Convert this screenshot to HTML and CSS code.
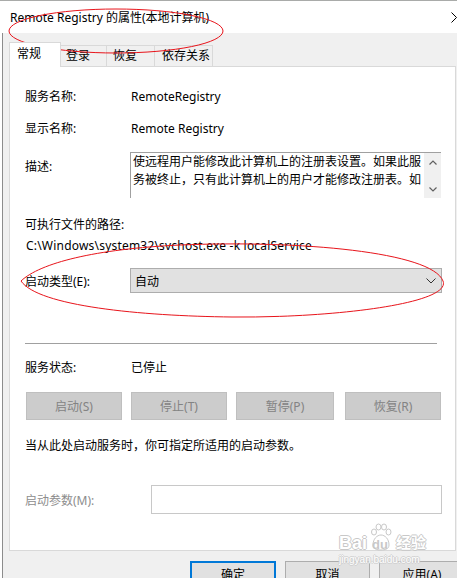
FILE: index.html
```html
<!DOCTYPE html>
<html>
<head>
<meta charset="utf-8">
<link rel="stylesheet" href="styles.css">
</head>
<body>
<div class="titlebar">
  <span class="title">Remote Registry 的属性(本地计算机)</span>
  <svg class="close" width="6" height="11" viewBox="0 0 6 11"><path d="M0.5 0.5 L5.5 5.5 L0.5 10.5" fill="none" stroke="#000" stroke-width="1"/></svg>
</div>
<div class="window">
  <div class="tabs">
    <div class="tab active">常规</div>
    <div class="tab t2">登录</div>
    <div class="tab t3">恢复</div>
    <div class="tab t4">依存关系</div>
  </div>
  <div class="panel">
    <div class="row r-name"><span class="label">服务名称:</span><span class="value">RemoteRegistry</span></div>
    <div class="row r-display"><span class="label">显示名称:</span><span class="value">Remote Registry</span></div>
    <div class="row r-desc">
      <span class="label desc-label">描述:</span>
      <div class="desc">
        <div class="desc-text">
          <div>使远程用户能修改此计算机上的注册表设置。如果此服</div>
          <div>务被终止，只有此计算机上的用户才能修改注册表。如</div>
        </div>
        <div class="scroll">
          <svg width="8" height="5" viewBox="0 0 8 5"><path d="M0.5 4.5 L4 1 L7.5 4.5" fill="none" stroke="#606060" stroke-width="1.2"/></svg>
          <svg width="8" height="5" viewBox="0 0 8 5"><path d="M0.5 0.5 L4 4 L7.5 0.5" fill="none" stroke="#606060" stroke-width="1.2"/></svg>
        </div>
      </div>
    </div>
    <div class="row r-pathlabel">可执行文件的路径:</div>
    <div class="row r-path">C:\Windows\system32\svchost.exe -k localService</div>
    <div class="row r-combo">
      <span class="label">启动类型(E):</span>
      <div class="combo"><span>自动</span><svg class="combo-arrow" width="10" height="6" viewBox="0 0 10 6"><path d="M0.5 0.5 L5 5 L9.5 0.5" fill="none" stroke="#333" stroke-width="1"/></svg></div>
    </div>
    <div class="sep"></div>
    <div class="row r-status"><span class="label">服务状态:</span><span class="value">已停止</span></div>
    <div class="row r-buttons">
      <div class="sbtn b1">启动(S)</div>
      <div class="sbtn b2">停止(T)</div>
      <div class="sbtn b3">暂停(P)</div>
      <div class="sbtn b4">恢复(R)</div>
    </div>
    <div class="row r-hint">当从此处启动服务时，你可指定所适用的启动参数。</div>
    <div class="row r-params">
      <span class="label params-label">启动参数(M):</span>
      <div class="input"></div>
    </div>
  </div>
  <div class="footer">
    <div class="btn default ok">确定</div>
    <div class="btn cancel">取消</div>
    <div class="btn apply">应用(A)</div>
  </div>
</div>

<div class="watermark">
  <div class="wm-logo">
    <span class="wm-bai">Bai</span>
    <span class="wm-paw">
      <svg width="22" height="28" viewBox="0 0 22 28">
        <g fill="#fff" stroke="#c8c8c8" stroke-width="1">
          <ellipse cx="4" cy="9" rx="2.5" ry="3"/>
          <ellipse cx="8.5" cy="4" rx="2.5" ry="3"/>
          <ellipse cx="14" cy="4" rx="2.5" ry="3"/>
          <ellipse cx="18.5" cy="9" rx="2.5" ry="3"/>
          <path d="M3 22 C3 16 7 12 11 12 C15 12 19 16 19 22 C19 26 15 27 11 27 C7 27 3 26 3 22 Z"/>
        </g>
      </svg>
      <span class="wm-du">du</span>
    </span>
    <span class="wm-jy">经验</span>
  </div>
  <div class="wm-url">jingyan.baidu.com</div>
</div>

<svg class="marks" width="457" height="578" viewBox="0 0 457 578">
  <ellipse cx="116" cy="31" rx="107" ry="22" fill="none" stroke="#e8141b" stroke-width="1"/>
  <path d="M21 281 C40 263 95 249 180 245 C300 240 432 252 443 281 C452 304 330 318 232 317 C140 316 38 306 21 281 Z" fill="none" stroke="#e8141b" stroke-width="1"/>
</svg>
</body>
</html>
```
FILE: styles.css
```css
body {
  margin: 0;
  width: 457px;
  height: 578px;
  overflow: hidden;
  position: relative;
  background: #fff;
  font-family: "Noto Sans", "Noto Sans CJK SC", sans-serif;
  font-size: 12px;
  color: #000;
}

.titlebar {
  height: 33px;
  box-sizing: border-box;
  border-top: 1px solid #a9aba9;
  display: flex;
  align-items: flex-start;
  padding-left: 10px;
}

.title {
  margin-top: 9px;
  line-height: 16px;
}

.close {
  margin-left: auto;
  margin-top: 11px;
}

.window {
  margin-left: 2px;
  border-left: 1px solid #8c8c8c;
  background: #f0f0f0;
  height: 545px;
}

.tabs {
  display: flex;
  align-items: flex-end;
  height: 33px;
  padding-left: 6px;
  box-sizing: border-box;
}

.tab {
  height: 21px;
  box-sizing: border-box;
  border: 1px solid #d9d9d9;
  border-bottom: none;
  padding: 3px 0 0 5px;
  line-height: 14px;
  background: #f0f0f0;
  margin-left: -1px;
}

.tab.active {
  height: 25px;
  width: 52px;
  margin-left: 0;
  background: #fff;
  padding: 4px 0 0 7px;
  margin-bottom: -1px;
  position: relative;
  z-index: 1;
}

.t2 { width: 47px; }
.t3 { width: 49px; padding-left: 6px; }
.t4 { width: 59px; padding-left: 7px; }

.panel {
  margin-left: 6px;
  width: 447px;
  height: 485px;
  box-sizing: border-box;
  border: 1px solid #d9d9d9;
  background: #fff;
  padding-left: 15px;
  display: flex;
  flex-direction: column;
}

.row {
  display: flex;
  align-items: center;
  height: 20px;
  flex: none;
}

.label {
  width: 105px;
  flex: none;
}

.value {
  padding-left: 1px;
}

.r-name { margin-top: 19px; }
.r-display { margin-top: 12px; }

.r-desc {
  margin-top: 14px;
  height: 46px;
  align-items: flex-start;
}

.desc-label {
  margin-top: 5px;
  line-height: 20px;
}

.desc {
  width: 311px;
  height: 46px;
  box-sizing: border-box;
  border-top: 1px solid #a0a0a0;
  border-left: 1px solid #a0a0a0;
  display: flex;
}

.desc-text {
  flex: 1;
  padding-left: 2px;
  line-height: 18px;
  overflow: hidden;
  white-space: nowrap;
}

.scroll {
  width: 17px;
  flex: none;
  background: #f0f0f0;
  display: flex;
  flex-direction: column;
  align-items: center;
  justify-content: space-between;
  padding: 7px 0 6px;
  box-sizing: border-box;
}

.r-pathlabel { margin-top: 16px; }
.r-path { margin-top: 1px; padding-left: 1px; letter-spacing: 0.2px; }

.r-combo {
  margin-top: 13px;
  height: 25px;
}

.combo {
  width: 312px;
  height: 25px;
  box-sizing: border-box;
  border: 1px solid #adadad;
  background: #e1e1e1;
  display: flex;
  align-items: center;
  padding-left: 4px;
}

.combo-arrow {
  margin-left: auto;
  margin-right: 5px;
}

.sep {
  margin-top: 50px;
  height: 1px;
  width: 412px;
  background: #a0a0a0;
  flex: none;
}

.r-status { margin-top: 13px; }

.r-buttons {
  margin-top: 15px;
  height: 28px;
  padding-left: 1px;
}

.sbtn {
  height: 28px;
  width: 96px;
  box-sizing: border-box;
  border: 1px solid #bfbfbf;
  background: #cccccc;
  color: #838383;
  display: flex;
  align-items: center;
  justify-content: center;
}

.b2 { margin-left: 9px; }
.b3 { margin-left: 9px; width: 98px; }
.b4 { margin-left: 11px; }

.r-hint { margin-top: 15px; }

.r-params {
  margin-top: 30px;
  height: 29px;
}

.params-label {
  width: 126px;
  color: #8d8d8d;
}

.input {
  width: 291px;
  height: 29px;
  box-sizing: border-box;
  border: 1px solid #c8c8c8;
  background: #fff;
}

.footer {
  display: flex;
  gap: 9px;
  padding-left: 187px;
  margin-top: 10px;
}

.btn {
  box-sizing: border-box;
  height: 26px;
  border: 1px solid #adadad;
  background: #e1e1e1;
  text-align: center;
  line-height: 14px;
  padding-top: 6px;
  flex: none;
}

.btn.default {
  border: 2px solid #0078d7;
  padding-top: 5px;
}

.ok { width: 86px; }
.cancel { width: 85px; }
.apply { width: 86px; }

.watermark {
  position: absolute;
  left: 339px;
  top: 522px;
  pointer-events: none;
}

.wm-logo {
  display: flex;
  align-items: flex-end;
  height: 31px;
}

.wm-bai, .wm-jy, .wm-du {
  color: #fff;
  text-shadow: -1px 0 #c8c8c8, 1px 0 #c8c8c8, 0 -1px #c8c8c8, 0 1px #c8c8c8;
  font-family: "Liberation Sans", "Noto Sans CJK SC", sans-serif;
  font-weight: bold;
}

.wm-bai {
  font-size: 18px;
  line-height: 20px;
}

.wm-paw {
  position: relative;
  width: 22px;
  height: 30px;
  margin-left: 3px;
  display: flex;
  flex-direction: column;
  align-items: center;
}

.wm-du {
  position: absolute;
  left: 2px;
  bottom: 1px;
  font-size: 13px;
  line-height: 14px;
  color: #c8c8c8;
  text-shadow: none;
}

.wm-jy {
  font-size: 15px;
  line-height: 20px;
  margin-left: 4px;
}

.wm-url {
  color: #fff;
  font-family: "Liberation Sans", sans-serif;
  font-size: 10px;
  line-height: 12px;
  margin-top: 1px;
  text-shadow: -1px 0 #d0d0d0, 1px 0 #d0d0d0, 0 -1px #d0d0d0, 0 1px #d0d0d0;
}

.marks {
  position: absolute;
  left: 0;
  top: 0;
  pointer-events: none;
}
```
